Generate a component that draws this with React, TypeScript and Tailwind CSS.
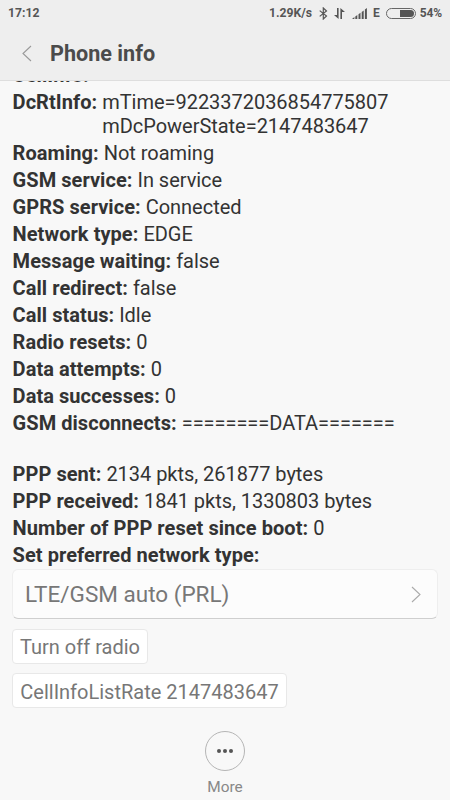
import React from "react";

type Row = { label: string; value: string[] };

const rows: Row[] = [
  { label: "CellInfo:", value: [""] },
  { label: "DcRtInfo:", value: ["mTime=9223372036854775807", "mDcPowerState=2147483647"] },
  { label: "Roaming:", value: ["Not roaming"] },
  { label: "GSM service:", value: ["In service"] },
  { label: "GPRS service:", value: ["Connected"] },
  { label: "Network type:", value: ["EDGE"] },
  { label: "Message waiting:", value: ["false"] },
  { label: "Call redirect:", value: ["false"] },
  { label: "Call status:", value: ["Idle"] },
  { label: "Radio resets:", value: ["0"] },
  { label: "Data attempts:", value: ["0"] },
  { label: "Data successes:", value: ["0"] },
  { label: "GSM disconnects:", value: ["========DATA=======", "\u00a0"] },
  { label: "PPP sent:", value: ["2134 pkts, 261877 bytes"] },
  { label: "PPP received:", value: ["1841 pkts, 1330803 bytes"] },
  { label: "Number of PPP reset since boot:", value: ["0"] },
  { label: "Set preferred network type:", value: [""] },
];

function StatusBar() {
  return (
    <div className="flex h-[26px] shrink-0 items-center pl-2 pr-[8px] text-[12px] font-bold leading-none text-[#555]">
      <span className="text-[12.2px]">17:12</span>
      <span className="ml-auto text-[12.2px]">1.29K/s</span>
      <svg className="ml-[7px]" width="9" height="13" viewBox="0 0 9 13" fill="none" stroke="#555" strokeWidth="1.2">
        <path d="M.7 3.600 7.500 9 4.300 12V1l3.200 3L.7 9.400" />
      </svg>
      <svg className="ml-[6px]" width="11" height="11" viewBox="0 0 11 11" fill="#555">
        <path d="M3 0h1.600v11L0 7h3zM6.400 0 11 4H8v7H6.400z" />
      </svg>
      <svg className="ml-[7px]" width="16" height="11" viewBox="0 0 16 11" fill="#555">
        <path d="M0 11l2.400-2v2zM3.300 8.500l2-1.500V11h-2zM6.500 6.300l2-1.500V11h-2zM9.700 3.900l2-1.500V11h-2zM12.900 1.500l2-1.500V11h-2z" />
      </svg>
      <span className="ml-[5px]">E</span>
      <span className="ml-[6px] flex h-[11px] w-[30px] justify-end rounded-full border border-[#666] p-px">
        <span className="w-[14px] rounded-r-full bg-[#555]" />
      </span>
      <span className="ml-[4px] text-[12px] tracking-[-0.15px]">54%</span>
    </div>
  );
}

export default function App() {
  return (
    <div className="flex h-[800px] w-[450px] flex-col overflow-hidden bg-[#f8f8f8] font-['Roboto',sans-serif] text-[#333]">
      <header className="flex h-[81px] shrink-0 flex-col border-b border-[#dedede] bg-[#eee]">
        <StatusBar />
        <div className="flex h-[54px] items-center pl-[22px]">
          <svg width="10" height="17" viewBox="0 0 10 17" fill="none" stroke="#999" strokeWidth="1.1">
            <path d="M9 1 1 8.500l8 7.500" />
          </svg>
          <h1 className="ml-[18px] pt-px text-[21.6px] font-bold leading-6 text-[#4b4b4b]">Phone info</h1>
        </div>
      </header>
      <main className="flex min-h-0 flex-1 flex-col items-start overflow-hidden px-3">
        <dl className="-mt-[18px] flex shrink-0 flex-col gap-[3px] pl-[0.6px] text-[20px] leading-[24px]">
          {rows.map(({ label, value }) => (
            <div key={label} className="flex whitespace-nowrap">
              <dt className="mr-[5px] font-bold tracking-[0.05px]">{label}</dt>
              <dd className="tracking-[-0.03px]">
                {value.map((line) => (
                  <div key={line}>{line}</div>
                ))}
              </dd>
            </div>
          ))}
        </dl>
        <button className="mt-[2px] flex h-[50px] w-full shrink-0 items-center justify-between rounded-md border border-[#eee] border-b-[#cfcfcf] bg-[#fcfcfc] pl-3 pr-[16px] text-[22.5px] text-[#777]">
          <span className="pt-[2px]">LTE/GSM auto (PRL)</span>
          <svg width="10" height="17" viewBox="0 0 10 17" fill="none" stroke="#aaa" strokeWidth="1.1">
            <path d="m1 1 8 7.500-8 7.500" />
          </svg>
        </button>
        <button className="mt-[10px] h-[35px] w-[136px] shrink-0 whitespace-nowrap rounded border border-[#e8e8e8] bg-white text-[20px] leading-none text-[#777]">Turn off radio</button>
        <button className="mt-[9px] h-[35px] w-[275px] shrink-0 whitespace-nowrap rounded border border-[#e8e8e8] bg-white pt-[2px] text-[20px] leading-none text-[#777]">CellInfoListRate 2147483647</button>
      </main>
      <footer className="flex h-[69px] shrink-0 flex-col items-center text-[#888]">
        <span className="flex size-10 shrink-0 items-center justify-center gap-[2.5px] rounded-full border border-[#b5b5b5]">
          <span className="size-[3.5px] rounded-full bg-[#555]" />
          <span className="size-[3.5px] rounded-full bg-[#555]" />
          <span className="size-[3.5px] rounded-full bg-[#555]" />
        </span>
        <span className="mt-[7px] text-[15.4px] leading-[18px]">More</span>
      </footer>
    </div>
  );
}
